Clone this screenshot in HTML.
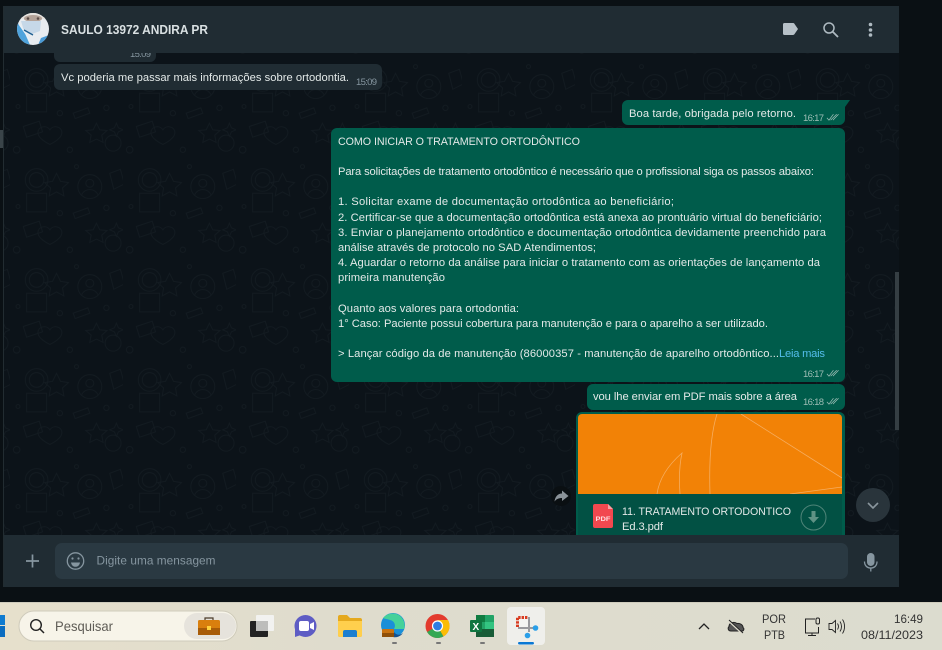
<!DOCTYPE html>
<html lang="pt">
<head>
<meta charset="utf-8">
<title>WhatsApp</title>
<style>
html,body{margin:0;padding:0;width:942px;height:650px;overflow:hidden;background:#0a1014}
svg{display:block}
text{font-family:"Liberation Sans",sans-serif;white-space:pre}
.m{font-size:11.2px;fill:#e3e9e8}
.t{font-size:9.5px;fill:#9dbdb5}
</style>
</head>
<body>
<svg width="942" height="650" viewBox="0 0 942 650" xmlns="http://www.w3.org/2000/svg">
<defs>
<pattern id="wp" width="113" height="100" patternUnits="userSpaceOnUse" x="10" y="60">
<g fill="none" stroke="#131b21" stroke-width="1.400" transform="scale(.665)">
<circle cx="40" cy="30" r="17"/><circle cx="40" cy="30" r="11"/>
<path d="M25 50h30v28h-30zM70 20l6 12 12 2-9 8 2 12-11-6-11 6 2-12-9-8 12-2z"/>
<circle cx="120" cy="40" r="18"/><circle cx="120" cy="35" r="6"/><path d="M108 52c4-10 20-10 24 0"/>
<path d="M150 20l16-6 6 22-16 8zM95 80l22-8 3 8-22 8zM20 100l24-8 5 16-24 8z"/>
<circle cx="75" cy="80" r="4"/><circle cx="145" cy="72" r="4"/><circle cx="12" cy="70" r="3"/><circle cx="100" cy="10" r="3"/>
<path d="M130 95l5 10 11 1-8 7 2 11-10-5-10 5 2-11-8-7 11-1zM60 105c5-8 18-5 18 4 0 8-10 14-18 18-8-4-18-10-18-18 0-9 13-12 18-4z"/>
<circle cx="155" cy="125" r="12"/><circle cx="90" cy="135" r="4"/><circle cx="10" cy="135" r="5"/><path d="M160 95l3 7 7 3-7 3-3 7-3-7-7-3 7-3z"/>
</g>
</pattern>
<clipPath id="av"><circle cx="33" cy="29" r="16"/></clipPath>
<clipPath id="pdfc"><rect x="578" y="414" width="264" height="80" rx="4"/></clipPath>
<linearGradient id="tb" x1="0" y1="0" x2="1" y2="0"><stop offset="0" stop-color="#e6e0cc"/><stop offset=".35" stop-color="#dfdccd"/><stop offset="1" stop-color="#dcdccf"/></linearGradient>
<symbol id="chk" viewBox="0 0 14 8"><path d="M1 5l2.200 2.400L8 1M5 7.400L11.500 1M7.500 7.400L13.500 1" fill="none" stroke="#9dbdb5" stroke-width=".8"/></symbol>
</defs>

<rect width="942" height="650" fill="#0a1014"/>
<rect x="4" y="53" width="895" height="482" fill="#0c1319"/>
<rect x="4" y="53" width="895" height="482" fill="url(#wp)"/>
<rect x="3" y="6" width="1" height="581" fill="#222c31"/>
<rect x="0" y="130" width="3" height="18" fill="#3a4449"/>

<!-- incoming (clipped by header) -->
<rect x="54" y="40" width="102" height="22" rx="6" fill="#202c33"/>
<text x="130" y="57" class="t" style="fill:#8696a0" textLength="21" lengthAdjust="spacing">15:09</text>

<!-- header -->
<rect x="4" y="6" width="895" height="47" fill="#202c33"/>
<g clip-path="url(#av)">
<rect x="17" y="13" width="32" height="32" fill="#e8ecf0"/>
<path d="M17 13h32v6H17z" fill="#e6e2de"/>
<ellipse cx="33" cy="18.500" rx="9" ry="3.500" fill="#b3a298"/>
<circle cx="28" cy="18.500" r="1.300" fill="#5a4c48"/><circle cx="38" cy="18.500" r="1.300" fill="#5a4c48"/>
<path d="M21 21h20l-1 10-8 3-8-3z" fill="#c6d8e8"/>
<path d="M17 22l7 9 6 14H17z" fill="#4fa3dc"/>
<path d="M19 24l7 10 5 10" fill="none" stroke="#e8f0f6" stroke-width="1.500"/>
<path d="M41 38l8-3v10H38z" fill="#4a9bd6"/>
<path d="M24 30l9 5" stroke="#1c5d8f" stroke-width="1.300"/>
</g>
<text x="61" y="34" font-size="12.500" font-weight="bold" fill="#d9e0e2" textLength="147" lengthAdjust="spacingAndGlyphs">SAULO 13972 ANDIRA PR</text>
<!-- header icons -->
<path d="M783 24.500a1.500 1.500 0 0 1 1.500-1.500h8.500c.6 0 1.100.3 1.400.7l3.600 5.300-3.600 5.300c-.3.400-.8.700-1.400.7h-8.500a1.500 1.500 0 0 1-1.500-1.500z" fill="#b7c1c8"/>
<circle cx="829" cy="28" r="5" fill="none" stroke="#aebac1" stroke-width="1.500"/>
<path d="M832.500 31.500l5.500 5.500" stroke="#aebac1" stroke-width="1.800"/>
<circle cx="870.500" cy="24.500" r="1.800" fill="#aebac1"/><circle cx="870.500" cy="30" r="1.800" fill="#aebac1"/><circle cx="870.500" cy="35" r="1.800" fill="#aebac1"/>

<rect x="54" y="64" width="328" height="26" rx="6" fill="#202c33"/>
<text x="61" y="81" class="m" textLength="288" lengthAdjust="spacing">Vc poderia me passar mais informações sobre ortodontia.</text>
<text x="356" y="85" class="t" style="fill:#8696a0" textLength="21" lengthAdjust="spacing">15:09</text>

<!-- out 1 -->
<path d="M622 106a6 6 0 0 1 6-6h222l-5 7v12a6 6 0 0 1-6 6H628a6 6 0 0 1-6-6z" fill="#005c4b"/>
<text x="629" y="117" class="m" textLength="167" lengthAdjust="spacing">Boa tarde, obrigada pelo retorno.</text>
<text x="803" y="121" class="t" textLength="21" lengthAdjust="spacing">16:17</text>
<use href="#chk" x="826" y="113" width="13" height="8"/>

<!-- big bubble -->
<rect x="331" y="128" width="514" height="254" rx="6" fill="#005c4b"/>
<text x="338" y="145" class="m" style="font-size:10.700px" textLength="242" lengthAdjust="spacing">COMO INICIAR O TRATAMENTO ORTODÔNTICO</text>
<text x="338" y="175" class="m" textLength="476" lengthAdjust="spacing">Para solicitações de tratamento ortodôntico é necessário que o profissional siga os passos abaixo:</text>
<text x="338" y="205" class="m" textLength="336" lengthAdjust="spacing">1. Solicitar exame de documentação ortodôntica ao beneficiário;</text>
<text x="338" y="221" class="m" textLength="484" lengthAdjust="spacing">2. Certificar-se que a documentação ortodôntica está anexa ao prontuário virtual do beneficiário;</text>
<text x="338" y="236" class="m" textLength="488" lengthAdjust="spacing">3. Enviar o planejamento ortodôntico e documentação ortodôntica devidamente preenchido para</text>
<text x="338" y="251" class="m" textLength="258" lengthAdjust="spacing">análise através de protocolo no SAD Atendimentos;</text>
<text x="338" y="266" class="m" textLength="482" lengthAdjust="spacing">4. Aguardar o retorno da análise para iniciar o tratamento com as orientações de lançamento da</text>
<text x="338" y="281" class="m" textLength="107" lengthAdjust="spacing">primeira manutenção</text>
<text x="338" y="312" class="m" textLength="181" lengthAdjust="spacing">Quanto aos valores para ortodontia:</text>
<text x="338" y="327" class="m" textLength="430" lengthAdjust="spacing">1° Caso: Paciente possui cobertura para manutenção e para o aparelho a ser utilizado.</text>
<text x="338" y="357" class="m" textLength="441" lengthAdjust="spacing">&gt; Lançar código da de manutenção (86000357 - manutenção de aparelho ortodôntico...</text>
<text x="779" y="357" class="m" style="fill:#53bdeb" textLength="46" lengthAdjust="spacing">Leia mais</text>
<text x="803" y="377" class="t" textLength="21" lengthAdjust="spacing">16:17</text>
<use href="#chk" x="826" y="369" width="13" height="8"/>

<!-- out 3 -->
<rect x="587" y="384" width="258" height="26" rx="6" fill="#005c4b"/>
<text x="593" y="400" class="m" textLength="204" lengthAdjust="spacing">vou lhe enviar em PDF mais sobre a área</text>
<text x="803" y="405" class="t" textLength="21" lengthAdjust="spacing">16:18</text>
<use href="#chk" x="826" y="397" width="13" height="8"/>

<!-- document -->
<path d="M576 418a6 6 0 0 1 6-6h257a6 6 0 0 1 6 6v117H576z" fill="#005c4b"/>
<rect x="578" y="414" width="264" height="84" rx="4" fill="#f28206"/>
<g clip-path="url(#pdfc)" fill="none" stroke="#f6ad5f" stroke-width=".8">
<path d="M717 414c-7 22-8 50-7 80M741 414l101 64M657 494c2-14 10-28 25-41-3 14-3 28-2 41M790 494l52-7"/>
</g>
<rect x="578" y="494" width="264" height="41" fill="#025144"/>
<path d="M595 504h13l5 5v17a2 2 0 0 1-2 2h-16a2 2 0 0 1-2-2v-20a2 2 0 0 1 2-2z" fill="#f2484f"/>
<path d="M608 504l5 5h-5z" fill="#f8a0a4"/>
<text x="595.500" y="521" font-size="6.500" font-weight="bold" fill="#ffdfe0" textLength="15" lengthAdjust="spacingAndGlyphs">PDF</text>
<text x="622" y="515" class="m" style="font-size:10.600px" textLength="169" lengthAdjust="spacing">11. TRATAMENTO ORTODONTICO</text>
<text x="622" y="530" class="m" textLength="41" lengthAdjust="spacing">Ed.3.pdf</text>
<circle cx="813.500" cy="517.500" r="12.500" fill="none" stroke="#4f8478" stroke-width="1"/>
<path d="M811.500 511h4v6h3.500l-5.500 6-5.500-6h3.500z" fill="#5f9285"/>

<!-- forward -->
<circle cx="561" cy="496" r="10" fill="#0a0f12"/>
<path d="M562 490.500l6.500 5.500-6.500 5v-3c-3.500 0-5.500 1-7.500 3.500.5-4.500 3-8 7.500-8z" fill="#8a9298"/>

<!-- scrollbar -->
<rect x="895" y="272" width="4" height="158" fill="#353e43"/>

<!-- scroll down -->
<circle cx="873" cy="505" r="17" fill="#29343b"/>
<path d="M868 503l5 5 5-5" fill="none" stroke="#8a969d" stroke-width="1.600"/>

<!-- footer -->
<rect x="4" y="535" width="895" height="52" fill="#202c33"/>
<rect x="55" y="543" width="793" height="36" rx="7" fill="#2a3942"/>
<path d="M32.500 554.500v13M26 561h13" stroke="#8696a0" stroke-width="1.700"/>
<circle cx="75.500" cy="561" r="8.200" fill="none" stroke="#8696a0" stroke-width="1.300"/>
<circle cx="72.500" cy="558.500" r="1.100" fill="#8696a0"/><circle cx="78.500" cy="558.500" r="1.100" fill="#8696a0"/>
<path d="M71 562.500h9c-.5 3-2.300 4.300-4.500 4.300s-4-1.300-4.500-4.300z" fill="#8696a0"/>
<text x="96.500" y="564.500" font-size="11.800" fill="#8696a0" textLength="119" lengthAdjust="spacing">Digite uma mensagem</text>
<rect x="867" y="553" width="7.500" height="13" rx="3.700" fill="#8696a0"/>
<path d="M864.500 561.500c0 4 2.500 6.500 6.300 6.500s6.200-2.500 6.200-6.500M870.800 568v3.500" fill="none" stroke="#8696a0" stroke-width="1.300"/>

<!-- taskbar -->
<rect x="0" y="602" width="942" height="48" fill="url(#tb)"/>
<rect x="0" y="602" width="942" height="1" fill="#cfccbd"/>
<rect x="0" y="615" width="5" height="10" fill="#0f7bd0"/><rect x="0" y="626" width="5" height="11" fill="#0a6cc0"/>
<rect x="19" y="611" width="218" height="30" rx="15" fill="#f7f4e9" stroke="#cfcbbb" stroke-width="1"/>
<circle cx="36" cy="625" r="5.300" fill="none" stroke="#222" stroke-width="1.400"/>
<path d="M40 629l4 4" stroke="#222" stroke-width="1.500"/>
<text x="55" y="631" font-size="14" fill="#5f5c56" textLength="58" lengthAdjust="spacingAndGlyphs">Pesquisar</text>
<rect x="184" y="613" width="52" height="26" rx="13" fill="#e6e3dc"/>
<rect x="198" y="620" width="22" height="15" rx="1.500" fill="#d97f0e"/>
<rect x="198" y="628" width="22" height="7" fill="#a85c08"/>
<path d="M205 620v-2h8v2" fill="none" stroke="#4a3a2a" stroke-width="1.200"/>
<rect x="207" y="626" width="4" height="4" fill="#ffd23d"/>
<rect x="256" y="615" width="18" height="16" rx="1" fill="#f2f2f0"/>
<rect x="250" y="621" width="18" height="16" rx="1" fill="#222"/>
<rect x="256" y="621" width="12" height="10" fill="#bdbdbb"/>
<!-- meet -->
<circle cx="305.500" cy="626" r="11" fill="#5e5cc4"/>
<path d="M295 628v9l6-2z" fill="#5e5cc4"/>
<rect x="299" y="621" width="10" height="10" rx="2" fill="#fff"/>
<path d="M310 624l4-2v8l-4-2z" fill="#fff"/>
<!-- folder -->
<path d="M338 617a2 2 0 0 1 2-2h7l3 3h10a2 2 0 0 1 2 2v15a2 2 0 0 1-2 2h-20a2 2 0 0 1-2-2z" fill="#e5a91e"/>
<path d="M338 621h24v14a2 2 0 0 1-2 2h-20a2 2 0 0 1-2-2z" fill="#ffcf4d"/>
<path d="M343 632a2 2 0 0 1 2-2h10a2 2 0 0 1 2 2v5h-14z" fill="#1c7fd0"/>
<!-- edge -->
<circle cx="393" cy="625" r="12" fill="#1a8fd8"/>
<path d="M383 618c5-6 15-6 19 0 3 4 3 9 2 11h-10c2-3 1-8-4-9-3-1-5-1-7-2z" fill="#45d19a"/>
<path d="M393 630c2 5 6 6 10 3-2 3-6 5-10 4z" fill="#15518f"/>
<rect x="382" y="629" width="12" height="8" rx="1" fill="#c9720f"/>
<rect x="382" y="633" width="12" height="4" fill="#8f4f08"/>
<rect x="392" y="642" width="5" height="2" rx="1" fill="#777"/>
<!-- chrome -->
<circle cx="437.500" cy="626" r="12" fill="#e33b2e"/>
<path d="M437.500 626l-10.400 6A12 12 0 0 0 443.500 636.400z" fill="#34a853"/>
<path d="M437.500 626l6 10.400A12 12 0 0 0 448 620h-10.500z" fill="#fbbc05"/>
<circle cx="437.500" cy="626" r="5.600" fill="#fff"/>
<circle cx="437.500" cy="626" r="4.400" fill="#2f7de1"/>
<rect x="436" y="642" width="5" height="2" rx="1" fill="#777"/>
<!-- excel -->
<rect x="476" y="615" width="18" height="22" rx="1" fill="#21a366"/>
<rect x="476" y="615" width="9" height="7" fill="#107c41"/>
<rect x="485" y="622" width="9" height="7.500" fill="#33c481"/>
<rect x="476" y="629" width="18" height="8" fill="#185c37"/>
<rect x="470" y="620" width="12" height="12" rx="1" fill="#0f7540"/>
<text x="472.500" y="630" font-size="10" font-weight="bold" fill="#fff">X</text>
<rect x="480" y="642" width="5" height="2" rx="1" fill="#777"/>
<!-- snip -->
<rect x="507" y="607" width="38" height="38" rx="4" fill="#efefeb"/>
<path d="M518 617h11v10.500h-11z" fill="#f4f4f2"/>
<path d="M529 617v15M518 628h19" fill="none" stroke="#9a9a9e" stroke-width="2"/>
<path d="M517.500 627v-9.500h10" fill="none" stroke="#d83b20" stroke-width="3" stroke-dasharray="2.400 1"/>
<circle cx="535.500" cy="628" r="2.800" fill="#2a9fe8"/><circle cx="527.500" cy="635.500" r="2.800" fill="#2a9fe8"/>
<rect x="518" y="642" width="16" height="2.500" rx="1.200" fill="#0a78d4"/>

<!-- tray -->
<path d="M699 629l5-5 5 5" fill="none" stroke="#222" stroke-width="1.300"/>
<path d="M731 631c-3 0-3.500-3-2-4.500 0-3.500 5-5.500 8-3 2.500-.5 6 1 6 4 1.500 1 1 3.500-1 3.500z" fill="#555" stroke="#222" stroke-width="1"/>
<path d="M729 621l13 12" stroke="#e0ddcf" stroke-width="2.200"/><path d="M729 620l14 13" stroke="#222" stroke-width="1"/>
<text x="762" y="623" font-size="12" fill="#333" textLength="24" lengthAdjust="spacingAndGlyphs">POR</text>
<text x="764" y="639" font-size="12" fill="#333" textLength="21" lengthAdjust="spacingAndGlyphs">PTB</text>
<path d="M815 619h-9.500v14h13v-6M812 633v2.500M808 635.500h8" fill="none" stroke="#222" stroke-width="1"/>
<rect x="816" y="618" width="3.500" height="6" rx="1.500" fill="none" stroke="#222" stroke-width="1"/>
<path d="M829 623.500h3l3.500-3v12l-3.500-3h-3z" fill="none" stroke="#222" stroke-width=".9"/>
<path d="M837.500 623.500c1.300 2 1.300 4 0 6M840 621.500c2 3 2 7 0 10M842.500 619.500c2.700 4 2.700 10 0 14" fill="none" stroke="#222" stroke-width=".9"/>
<text x="894" y="623" font-size="12" fill="#333" textLength="29" lengthAdjust="spacingAndGlyphs">16:49</text>
<text x="861" y="639" font-size="12" fill="#333" textLength="62" lengthAdjust="spacingAndGlyphs">08/11/2023</text>
</svg>
</body>
</html>
